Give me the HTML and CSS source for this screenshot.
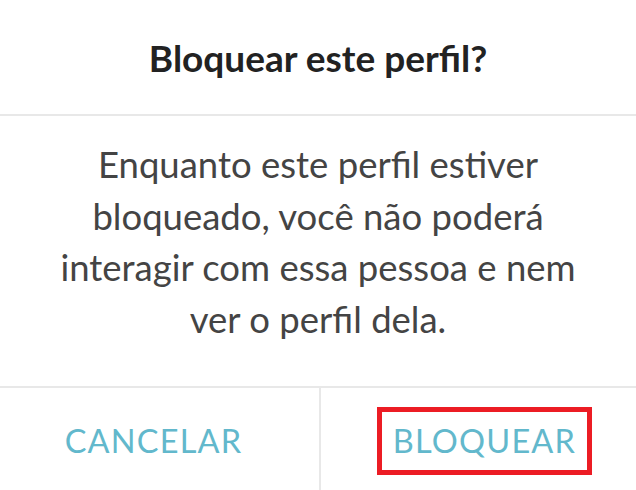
FILE: index.html
```html
<!DOCTYPE html>
<html lang="pt">
<head>
<meta charset="utf-8">
<link rel="stylesheet" href="styles.css">
</head>
<body>
<div class="dialog">
  <div class="header"><h1 class="title">Bloquear este perfil?</h1></div>
  <div class="content">
    <p class="message">Enquanto este perfil estiver<br>bloqueado, você não poderá<br>interagir com essa pessoa e nem<br>ver o perfil dela.</p>
  </div>
  <div class="actions">
    <div class="action action-left"><span class="btn">CANCELAR</span></div>
    <div class="action action-right"><span class="btn btn-marked">BLOQUEAR</span></div>
  </div>
</div>
</body>
</html>
```
FILE: styles.css
```css
html, body {
  margin: 0;
  padding: 0;
  background: #ffffff;
}
.dialog {
  width: 636px;
  height: 490px;
  display: flex;
  flex-direction: column;
  font-family: "Lato", "Open Sans", sans-serif;
}
.header {
  height: 114px;
  display: flex;
  align-items: center;
  justify-content: center;
  border-bottom: 2px solid #e8e8e8;
}
.title {
  margin: 0;
  font-size: 37px;
  font-weight: 700;
  color: #222222;
}
.content {
  height: 272px;
  box-sizing: border-box;
  padding-bottom: 18px;
  display: flex;
  align-items: center;
  justify-content: center;
  border-bottom: 2px solid #e8e8e8;
}
.message {
  margin: 0;
  text-align: center;
  font-size: 36.5px;
  line-height: 51.5px;
  color: #444444;
}
.actions {
  flex: 1;
  display: flex;
}
.action {
  display: flex;
  align-items: center;
  justify-content: center;
  box-sizing: border-box;
  padding-top: 4px;
}
.action-left {
  width: 321px;
  padding-right: 12px;
  border-right: 2px solid #e8e8e8;
}
.action-right {
  flex: 1;
  padding-left: 12px;
}
.btn {
  font-size: 32.5px;
  line-height: 38px;
  letter-spacing: 1.2px;
  color: #62b8cc;
}
.btn-marked {
  outline: 5px solid #ec1c24;
  padding: 10px 11px;
}
```
